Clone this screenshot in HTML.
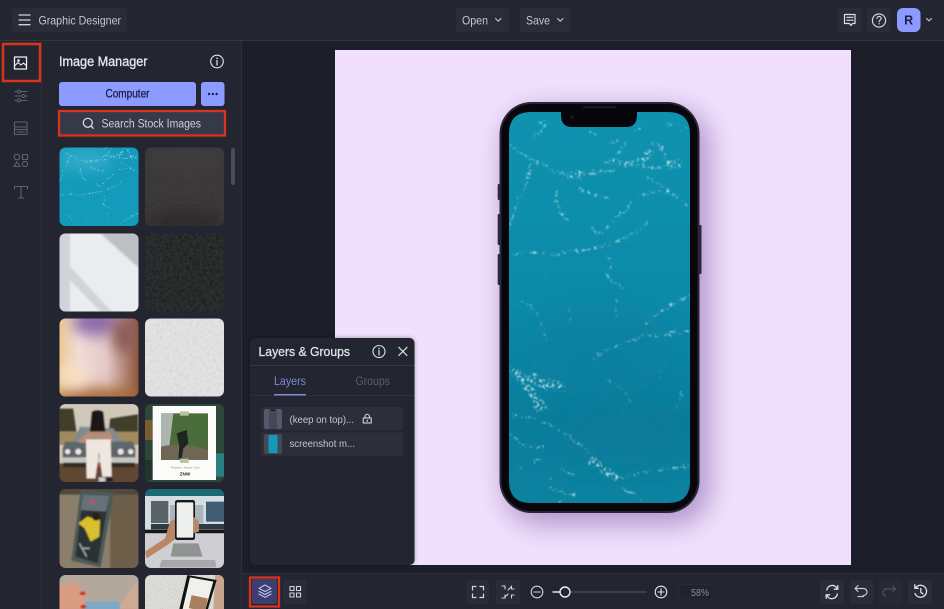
<!DOCTYPE html>
<html lang="en"><head><meta charset="utf-8"><title>Graphic Designer</title>
<style>
html,body{margin:0;padding:0;width:944px;height:609px;overflow:hidden;background:#1c1e29}
svg{display:block;position:absolute;left:0;top:0;filter:blur(.3px)}
text{font-family:"Liberation Sans",sans-serif}
.i{fill:none;stroke-linecap:round;stroke-linejoin:round}
</style></head><body>
<svg width="944" height="609" viewBox="0 0 944 609" xmlns="http://www.w3.org/2000/svg">
<defs>
<linearGradient id="wg" x1="0" y1="0" x2="0" y2="1"><stop offset="0" stop-color="#0e92af"/><stop offset=".5" stop-color="#0c8aa8"/><stop offset=".8" stop-color="#0a7d9c"/><stop offset="1" stop-color="#0c83a1"/></linearGradient>
<linearGradient id="shot" x1="0" y1="0" x2="1" y2="0"><stop offset="0" stop-color="#ecc88f"/><stop offset=".25" stop-color="#f0dcd8"/><stop offset=".6" stop-color="#e3c8c6"/><stop offset="1" stop-color="#8b5238"/></linearGradient>
<filter id="b05"><feGaussianBlur stdDeviation=".5"/></filter>
<filter id="b1"><feGaussianBlur stdDeviation="1"/></filter>
<filter id="b2" x="-30%" y="-30%" width="160%" height="160%"><feGaussianBlur stdDeviation="2"/></filter>
<filter id="b8" x="-150%" y="-150%" width="400%" height="400%"><feGaussianBlur stdDeviation="7"/></filter>
<filter id="b16" x="-40%" y="-30%" width="180%" height="160%"><feGaussianBlur stdDeviation="14"/></filter>
<filter id="spark" x="-5%" y="-5%" width="110%" height="110%">
<feTurbulence type="fractalNoise" baseFrequency=".07" numOctaves="2" seed="4" result="n1"/>
<feDisplacementMap in="SourceGraphic" in2="n1" scale="20" xChannelSelector="R" yChannelSelector="G" result="d"/>
<feGaussianBlur in="d" stdDeviation="2" result="soft"/>
<feTurbulence type="fractalNoise" baseFrequency=".11" numOctaves="2" seed="7" result="n2"/>
<feColorMatrix in="n2" values="0 0 0 0 .86 0 0 0 0 .96 0 0 0 0 .97 6 0 0 0 -2.9" result="sp"/>
<feComposite in="sp" in2="soft" operator="in" result="o"/>
<feGaussianBlur in="o" stdDeviation="1.600"/>
</filter>
<filter id="nw"><feTurbulence type="fractalNoise" baseFrequency=".45" numOctaves="3" seed="3"/><feColorMatrix values="0 0 0 0 1 0 0 0 0 1 0 0 0 0 1 1.7 0 0 0 -.8"/></filter>
<filter id="nd"><feTurbulence type="fractalNoise" baseFrequency=".3" numOctaves="3" seed="8"/><feColorMatrix values="0 0 0 0 0 0 0 0 0 0 0 0 0 0 0 2 0 0 0 -.8"/></filter>
<filter id="speck"><feTurbulence type="fractalNoise" baseFrequency=".7" numOctaves="2" seed="11"/><feColorMatrix values="0 0 0 0 .25 0 0 0 0 .25 0 0 0 0 .25 5 0 0 0 -3.1"/></filter>
<clipPath id="scr"><path d="M531 112H561V115Q561 127 572 127H626Q637 127 637 115V112H668Q690 112 690 134V481Q690 503 668 503H531Q509 503 509 481V134Q509 112 531 112Z"/></clipPath>
<clipPath id="c1"><rect x="59.500" y="147.500" width="79" height="78.500" rx="6"/></clipPath>
<clipPath id="c2"><rect x="145" y="147.500" width="79" height="78.500" rx="6"/></clipPath>
<clipPath id="c3"><rect x="59.500" y="233.500" width="79" height="78" rx="6"/></clipPath>
<clipPath id="c4"><rect x="145" y="233.500" width="79" height="78" rx="6"/></clipPath>
<clipPath id="c5"><rect x="59.500" y="318.500" width="79" height="78" rx="6"/></clipPath>
<clipPath id="c6"><rect x="145" y="318.500" width="79" height="78" rx="6"/></clipPath>
<clipPath id="c7"><rect x="59.500" y="404" width="79" height="78" rx="6"/></clipPath>
<clipPath id="c8"><rect x="145" y="404" width="79" height="78" rx="6"/></clipPath>
<clipPath id="c9"><rect x="59.500" y="489" width="79" height="79" rx="6"/></clipPath>
<clipPath id="c10"><rect x="145" y="489" width="79" height="79" rx="6"/></clipPath>
<clipPath id="c11"><rect x="59.500" y="575" width="79" height="50" rx="6"/></clipPath>
<clipPath id="c12"><rect x="145" y="575" width="79" height="50" rx="6"/></clipPath>
<g id="sparks" fill="none" stroke="#fff" stroke-linecap="round" filter="url(#spark)" opacity=".68">
<g stroke-width="6">
<path d="M30 135C60 160 95 180 130 195C160 215 195 225 235 225C270 215 320 215 350 210"/>
<path d="M95 180C90 220 80 260 55 300C45 330 35 360 30 385"/>
<path d="M225 255C245 275 280 290 325 293"/>
<path d="M170 270C165 300 170 330 200 355"/>
<path d="M395 310C370 340 335 355 320 385C300 410 285 400 280 385"/>
<path d="M30 465C80 450 120 460 170 465C210 450 250 455 265 450C300 440 320 430 350 425C385 410 420 395 440 370"/>
<path d="M320 470C335 490 345 510 320 520C330 545 350 555 370 560"/>
<path d="M285 775C320 745 370 730 420 712C470 700 530 705 570 690"/>
<path d="M440 670C470 640 520 610 570 585"/>
<path d="M350 165L375 130M330 180C370 190 420 195 440 150M450 130C480 125 495 150 495 180"/>
<path d="M315 185C400 195 470 210 540 200M440 230C490 260 530 290 570 325M420 285C450 275 480 270 510 280"/>
<path d="M120 60C150 80 130 100 90 115M270 95l20 8M330 125h20M410 90h10M505 75h25M550 85h12"/>
<path d="M30 945C120 950 190 990 260 1050C290 1080 310 1110 370 1135C430 1110 500 1110 570 1095"/>
<path d="M30 1000C60 1030 90 1050 130 1040M60 1100h2M100 1085l25-5M145 1135h15M180 1110C200 1110 215 1120 220 1130M150 1165C180 1170 200 1180 225 1185M190 1200L175 1215M370 1165C390 1180 410 1190 430 1200"/>
</g>
<g stroke-width="22">
<path d="M30 810C70 830 100 870 115 925"/><path d="M50 815C90 860 140 840 185 865"/><path d="M75 850C90 880 110 890 130 920"/><path d="M100 830C120 850 150 870 170 850"/>
<path d="M275 1082C285 1090 300 1110 345 1130"/><path d="M215 225h30"/><path d="M430 180l20-25"/><path d="M510 190h25"/>
</g>
<g stroke-width="5" opacity=".45">
<path d="M40 620C90 580 130 660 140 720M210 620v50M350 600v50M320 840C370 860 420 900 360 940M480 800v40M530 930l20-70M150 720h2M135 530h8"/>
</g>
</g>
</defs>

<!-- canvas -->
<rect width="944" height="609" fill="#1c1e29"/>
<rect x="335" y="50" width="516" height="515" fill="#f1e0fd"/>
<!-- phone -->
<rect x="505" y="110" width="204" height="414" rx="34" fill="#7f5fa5" opacity=".6" filter="url(#b16)"/>
<g fill="#2c283b"><rect x="497.700" y="184" width="2.500" height="16" rx="1"/><rect x="497.700" y="214" width="2.500" height="31" rx="1"/><rect x="497.700" y="254" width="2.500" height="31" rx="1"/><rect x="699" y="225" width="2.500" height="49" rx="1"/></g>
<rect x="499.500" y="102" width="200" height="411" rx="32" fill="#2a2537"/>
<rect x="501.500" y="104" width="196" height="407" rx="30" fill="#07060b"/>
<g clip-path="url(#scr)">
<rect x="509" y="112" width="181" height="391" fill="url(#wg)"/>
<ellipse cx="600" cy="350" rx="70" ry="50" fill="#0a7f9f" opacity=".5" filter="url(#b16)"/>
<ellipse cx="620" cy="430" rx="60" ry="35" fill="#077a99" opacity=".55" filter="url(#b16)"/>
<use href="#sparks" transform="translate(500 100) scale(.3333)"/>
</g>
<rect x="583" y="106.500" width="33" height="1.400" rx=".7" fill="#25222d"/>
<circle cx="572" cy="117" r="2" fill="#141622"/>

<!-- top bar -->
<rect width="944" height="40" fill="#232531"/>
<rect y="40" width="944" height="1" fill="#33353f"/>
<rect x="12" y="8" width="115" height="24" rx="3" fill="#2a2c39"/>
<path d="M19 15H30M19 20H30M19 24.700H30" stroke="#d2d3d9" stroke-width="1.300" class="i"/>
<text x="38.500" y="24.300" font-size="12" fill="#c6c7cf" textLength="82.500" lengthAdjust="spacingAndGlyphs">Graphic Designer</text>
<rect x="456" y="8" width="53" height="24" rx="3" fill="#2a2c39"/>
<text x="462" y="24.300" font-size="12" fill="#c6c7cf" textLength="26" lengthAdjust="spacingAndGlyphs">Open</text>
<path d="M495.500 18.500L498.300 21.200L501 18.500" stroke="#c6c7cf" stroke-width="1.100" class="i"/>
<rect x="520" y="8" width="50" height="24" rx="3" fill="#2a2c39"/>
<text x="526" y="24.300" font-size="12" fill="#c6c7cf" textLength="24" lengthAdjust="spacingAndGlyphs">Save</text>
<path d="M557.500 18.500L560.300 21.200L563 18.500" stroke="#c6c7cf" stroke-width="1.100" class="i"/>
<rect x="838" y="8" width="24" height="24" rx="3" fill="#2a2c39"/>
<path d="M844.500 14.500H855V23.500H852.500L851 25.500L849.500 23.500H844.500ZM846.800 17.300H853M846.800 20.200H853" stroke="#e0e1e6" stroke-width="1.200" class="i"/>
<rect x="867" y="8" width="24" height="24" rx="3" fill="#2a2c39"/>
<circle cx="879" cy="20.500" r="6.600" stroke="#e0e1e6" stroke-width="1.100" class="i"/>
<path d="M877 18.500C877 15.800 881.200 15.800 881.200 18.500C881.200 20 879.100 20 879.100 21.800" stroke="#e0e1e6" stroke-width="1.100" class="i"/><circle cx="879.100" cy="23.800" r=".7" fill="#e0e1e6"/>
<rect x="897" y="8" width="23.500" height="24" rx="6" fill="#8c9bff"/>
<text x="908.700" y="24.500" font-size="12.500" font-weight="700" fill="#1b1d42" text-anchor="middle">R</text>
<path d="M926.500 18.500L929 20.800L931.500 18.500" stroke="#c6c7cf" stroke-width="1.100" class="i"/>

<!-- left rail + panel -->
<rect x="0" y="41" width="241" height="568" fill="#232531"/>
<rect x="41" y="41" width="1" height="568" fill="#2e303c"/>
<rect x="241" y="41" width="1" height="568" fill="#2e303c"/>
<g class="i" stroke-width="1.100">
<rect x="14.500" y="57" width="12" height="12" stroke="#f0f0f3" stroke-width="1.300"/>
<path d="M14.500 66L18 62.500L21 65L23.500 63L26.500 66" stroke="#f0f0f3"/><circle cx="18.500" cy="60.500" r="1.300" fill="#f0f0f3" stroke="none"/>
<g stroke="#5f6275">
<path d="M15 91.500H27M15 96H27M15 100.500H27"/><circle cx="19" cy="91.500" r="1.600" fill="#232531"/><circle cx="23.500" cy="96" r="1.600" fill="#232531"/><circle cx="19" cy="100.500" r="1.600" fill="#232531"/>
<rect x="14.500" y="122" width="12.500" height="12.500" rx=".5"/><path d="M14.500 127H27M14.500 129.500H27M17 132H24.500"/>
<circle cx="17" cy="157" r="2.800"/><rect x="22.500" y="154.500" width="5" height="5"/><path d="M17 161.800L20 166.500H14Z"/><circle cx="25" cy="164" r="2.600"/>
<path d="M14.500 189V186.500H27.500V189M21 186.500V198M18.500 198H23.500"/>
</g></g>
<rect x="3" y="44" width="37" height="37" fill="none" stroke="#d8331b" stroke-width="2.500"/>

<text x="59" y="66" font-size="13.500" fill="#e6e6ea" stroke="#e6e6ea" stroke-width=".35" textLength="88.500" lengthAdjust="spacingAndGlyphs">Image Manager</text>
<circle cx="217" cy="61.500" r="6.300" stroke="#e6e6ea" stroke-width="1.100" class="i"/>
<path d="M217 60.500V65" stroke="#e6e6ea" stroke-width="1.200" class="i"/><circle cx="217" cy="58.300" r=".8" fill="#e6e6ea"/>
<rect x="59" y="82" width="137" height="24" rx="3" fill="#8c9bff"/>
<text x="127.500" y="97.500" font-size="11.500" fill="#1b1e4b" stroke="#1b1e4b" stroke-width=".3" text-anchor="middle" textLength="44" lengthAdjust="spacingAndGlyphs">Computer</text>
<rect x="201" y="82" width="23.500" height="24" rx="3" fill="#8c9bff"/>
<g fill="#1b1e4b"><circle cx="209" cy="94" r="1.200"/><circle cx="212.800" cy="94" r="1.200"/><circle cx="216.600" cy="94" r="1.200"/></g>
<rect x="59" y="111" width="165" height="24" rx="2" fill="#363949"/>
<circle cx="87.800" cy="122.800" r="4.500" stroke="#e8e8ec" stroke-width="1.200" class="i"/><path d="M91.200 126.200L93.300 128.300" stroke="#e8e8ec" stroke-width="1.200" class="i"/>
<text x="101.500" y="127.700" font-size="11.500" fill="#cfd0d7" textLength="99.500" lengthAdjust="spacingAndGlyphs">Search Stock Images</text>
<rect x="59" y="111" width="166" height="24.500" fill="none" stroke="#d8331b" stroke-width="2.300"/>
<rect x="231" y="148" width="4" height="37" rx="2" fill="#484b5c"/>

<!-- thumbs -->
<g clip-path="url(#c1)"><rect x="59" y="147" width="80" height="80" fill="#149abb"/><ellipse cx="85" cy="160" rx="30" ry="12" fill="#3fb6d0" opacity=".6" filter="url(#b8)"/><use href="#sparks" transform="translate(55 130) scale(.15 .14)"/></g>
<g clip-path="url(#c2)"><rect x="145" y="147" width="80" height="80" fill="#3b3839"/><rect x="145" y="147" width="80" height="80" filter="url(#nw)" opacity=".06"/><ellipse cx="185" cy="222" rx="40" ry="12" fill="#2a2728" opacity=".7" filter="url(#b8)"/><ellipse cx="185" cy="160" rx="36" ry="12" fill="#454244" opacity=".5" filter="url(#b8)"/></g>
<g clip-path="url(#c3)"><rect x="59" y="233" width="80" height="80" fill="#eaedf0"/>
<path d="M70 233V312H59V233ZM66 262L112 312H101L66 276Z" fill="#d0d4d8" filter="url(#b1)"/><path d="M100 233H139V268Z" fill="#bcc0c3" filter="url(#b1)"/></g>
<g clip-path="url(#c4)"><rect x="145" y="233" width="80" height="80" fill="#2a2c2d"/><rect x="145" y="233" width="80" height="80" filter="url(#nw)" opacity=".09"/><rect x="145" y="233" width="80" height="80" filter="url(#nd)" opacity=".35"/></g>
<g clip-path="url(#c5)"><rect x="59" y="318" width="80" height="80" fill="url(#shot)"/>
<ellipse cx="96" cy="322" rx="24" ry="14" fill="#8d6aa8" filter="url(#b8)"/><ellipse cx="125" cy="335" rx="12" ry="18" fill="#8a5a58" filter="url(#b8)"/><ellipse cx="100" cy="398" rx="48" ry="10" fill="#a5662f" filter="url(#b8)"/><ellipse cx="72" cy="375" rx="14" ry="12" fill="#f8dfc0" filter="url(#b8)"/></g>
<g clip-path="url(#c6)"><rect x="145" y="318" width="80" height="80" fill="#e2e2e2"/><rect x="145" y="318" width="80" height="80" filter="url(#nd)" opacity=".05"/><rect x="145" y="318" width="80" height="80" filter="url(#nw)" opacity=".12"/></g>
<g clip-path="url(#c7)"><g transform="translate(50 400) scale(.33333)" filter="url(#b2)">
<rect x="25" y="10" width="245" height="240" fill="#d0c8b8"/><path d="M25 25H70L80 95H25ZM180 55L265 42V105H175Z" fill="#3f4029"/><rect x="25" y="95" width="245" height="40" fill="#a08a5e"/><rect x="25" y="190" width="245" height="60" fill="#5f4630"/>
<path d="M90 80L190 85L215 125H70Z" fill="#7f8b8e"/><path d="M45 125H250L255 145H38Z" fill="#5d676c"/><rect x="38" y="143" width="218" height="30" fill="#5e6365"/><rect x="38" y="172" width="218" height="16" fill="#c6c6c3"/><rect x="40" y="188" width="214" height="14" fill="#352a22"/>
<g fill="#e6e6e6"><circle cx="53" cy="155" r="8"/><circle cx="85" cy="155" r="9"/><circle cx="212" cy="155" r="9"/><circle cx="242" cy="155" r="8"/></g>
<rect x="136" y="188" width="26" height="14" fill="#b5483a"/>
<path d="M125 35Q143 25 160 35L168 110H118Z" fill="#1e1816"/><path d="M80 125L115 95H180L190 125H170L150 115H125L100 130Z" fill="#b58d78"/>
<path d="M108 118H182L185 230H157L147 155L136 235H110Z" fill="#efe7df"/><rect x="146" y="232" width="20" height="13" fill="#c9ccd0"/><rect x="170" y="232" width="18" height="13" fill="#20242a"/></g></g>
<g clip-path="url(#c8)"><g transform="translate(50 400) scale(.33333)" filter="url(#b1)">
<rect x="280" y="8" width="245" height="240" fill="#2f463a"/><rect x="280" y="60" width="28" height="60" fill="#7a5b30"/><rect x="497" y="160" width="30" height="70" fill="#2c7f80"/><rect x="280" y="180" width="28" height="60" fill="#20342c"/>
<rect x="308" y="18" width="190" height="222" fill="#fbfbf9"/><rect x="333" y="40" width="141" height="140" fill="#4c6d3b"/><path d="M333 40H370L358 140H333Z" fill="#adb6ae"/><path d="M333 140Q400 125 474 150V180H333Z" fill="#6f6656"/><path d="M380 100L410 90L415 130L400 145L395 175L385 175L388 140Z" fill="#1f2624"/>
<rect x="390" y="34" width="26" height="13" fill="#b7c49a"/><rect x="390" y="176" width="26" height="13" fill="#b7c49a"/>
<text x="405" y="206" font-size="9" fill="#8a8a84" text-anchor="middle" textLength="88" lengthAdjust="spacingAndGlyphs">Thanks, Hope Sun</text><text x="405" y="226" font-size="14" font-weight="700" fill="#2a2a2a" text-anchor="middle" textLength="32" lengthAdjust="spacingAndGlyphs">ZNW</text></g></g>
<g clip-path="url(#c9)"><g transform="translate(50 400) scale(.33333)" filter="url(#b2)">
<rect x="25" y="262" width="245" height="246" fill="#8b7f6c"/><rect x="180" y="262" width="90" height="246" fill="#6e5e4b"/><rect x="25" y="262" width="245" height="22" fill="#51483b"/>
<path d="M92 270L192 276L152 502L64 482Z" fill="#4b5a55"/><path d="M100 284L178 288L143 490L76 470Z" fill="#2b3134"/><path d="M100 284L178 288L168 335L92 330Z" fill="#66727a"/>
<path d="M85 370L112 350L150 360L148 410L122 425L104 385Z" fill="#d8c02e"/><circle cx="138" cy="350" r="12" fill="#2a1c18"/><rect x="122" y="300" width="12" height="10" fill="#d0407a"/><path d="M88 430L110 470M95 445h24" stroke="#aab0b2" stroke-width="4"/></g></g>
<g clip-path="url(#c10)"><g transform="translate(50 400) scale(.33333)" filter="url(#b1)">
<rect x="280" y="262" width="245" height="246" fill="#d4dde2"/><rect x="280" y="262" width="245" height="26" fill="#1f6b72"/><rect x="303" y="303" width="52" height="66" fill="#5a6367"/><rect x="468" y="305" width="55" height="60" fill="#3f5c72"/><rect x="360" y="315" width="100" height="55" fill="#aab5ba"/><rect x="303" y="372" width="220" height="16" fill="#2e3a44"/><rect x="280" y="389" width="245" height="11" fill="#121416"/><rect x="280" y="400" width="245" height="108" fill="#cfcfd3"/>
<path d="M370 430H445L458 470H362Z" fill="#8f9492"/><path d="M335 480H495L500 502H328Z" fill="#a7a7ac"/>
<path d="M285 455L345 415L360 365L378 355V415L352 435L290 475Z" fill="#b98766"/><rect x="375" y="300" width="60" height="120" rx="7" fill="#15161a"/><rect x="380" y="307" width="50" height="106" rx="3" fill="#eef0ee"/><path d="M430 350L447 365V395L430 400Z" fill="#b98766"/></g></g>
<g clip-path="url(#c11)"><g transform="translate(50 400) scale(.33333)" filter="url(#b2)">
<rect x="25" y="520" width="245" height="110" fill="#b3a89c"/><path d="M25 560L75 545L110 590L100 630H25Z" fill="#d99d83"/><path d="M200 630L262 540L270 630Z" fill="#d0a994"/><rect x="105" y="604" width="105" height="30" rx="6" fill="#7fa8c4"/><ellipse cx="98" cy="580" rx="9" ry="6" fill="#c23a2a"/><ellipse cx="100" cy="620" rx="9" ry="6" fill="#c23a2a"/></g></g>
<g clip-path="url(#c12)"><rect x="145" y="575" width="80" height="40" fill="#dcdbd8"/><rect x="145" y="575" width="80" height="40" filter="url(#speck)" opacity=".4"/><g transform="translate(50 400) scale(.33333)" filter="url(#b1)"><path d="M495 525H525V630H490Z" fill="#c9a48d"/><path d="M412 525L500 540L470 640H385Z" fill="#111214"/><path d="M420 532L490 545L463 640H395Z" fill="#f2f0ec"/><rect x="420" y="590" width="50" height="40" fill="#a9805f" transform="rotate(12 445 610)"/></g></g>

<!-- bottom bar -->
<rect x="242" y="573" width="702" height="36" fill="#232531"/>
<rect x="242" y="573" width="702" height="1" fill="#2e303c"/>
<rect x="252" y="579" width="25" height="25" rx="2" fill="#3d3e70"/>
<g stroke="#c4c6f5" stroke-width="1.100" class="i"><path d="M265 585L271 588.300L265 591.500L259 588.300ZM259 591.300L265 594.500L271 591.300M259 594L265 597.300L271 594"/></g>
<rect x="250" y="577.500" width="29" height="29" fill="none" stroke="#d8331b" stroke-width="2.300"/>
<rect x="283" y="580" width="24" height="24" rx="3" fill="#2a2c39"/>
<g stroke="#d6d7dc" stroke-width="1.100" class="i"><rect x="290" y="586.500" width="4" height="4"/><rect x="296.500" y="586.500" width="4" height="4"/><rect x="290" y="593" width="4" height="4"/><rect x="296.500" y="593" width="4" height="4"/></g>
<rect x="466.500" y="580" width="23" height="24" rx="3" fill="#2a2c39"/>
<path d="M472.500 590V586.500H476M480 586.500H483.500V590M483.500 594V597.500H480M476 597.500H472.500V594" stroke="#d6d7dc" stroke-width="1.200" class="i"/>
<rect x="496" y="580" width="24" height="24" rx="3" fill="#2a2c39"/>
<path d="M502 586H505V589M514 589H511.500V586M514 595H511.500V598M502 598H505V595M508 590L511 587M508 594L505 597" stroke="#d6d7dc" stroke-width="1.100" class="i"/>
<circle cx="537" cy="592" r="5.800" stroke="#d6d7dc" stroke-width="1.100" class="i"/><path d="M533.800 592H540.200" stroke="#d6d7dc" stroke-width="1.100" class="i"/>
<path d="M553 592H560" stroke="#e6e6ea" stroke-width="1.400" class="i"/><path d="M570 592H646" stroke="#565866" stroke-width="1" class="i"/>
<circle cx="565" cy="592" r="5" fill="#232531" stroke="#eeeef2" stroke-width="1.400"/>
<circle cx="661" cy="592" r="5.800" stroke="#e6e6ea" stroke-width="1.100" class="i"/><path d="M657.800 592H664.200M661 588.800V595.200" stroke="#e6e6ea" stroke-width="1.100" class="i"/>
<rect x="679" y="584.500" width="33" height="15.500" rx="2" fill="#20222d" stroke="#2c2e3a" stroke-width=".8"/>
<text x="691" y="596" font-size="10" fill="#8b8d99" textLength="18" lengthAdjust="spacingAndGlyphs">58%</text>
<rect x="820" y="580" width="24" height="24" rx="3" fill="#2a2c39"/>
<path d="M826.800 590A5.500 5.500 0 0 1 836.500 587.500L837.500 589M837.300 594A5.500 5.500 0 0 1 827.500 596.500L826.500 595M837.800 585.700V589.200H834.300M826.200 598.300V594.800H829.700" stroke="#e0e1e6" stroke-width="1.300" class="i"/>
<rect x="850" y="580" width="23.500" height="24" rx="3" fill="#2a2c39"/>
<path d="M858 585.500L855 588.500L858 591.500M855.500 588.500H863.500A3.500 3.500 0 0 1 863.500 595.500V596.500H858" stroke="#c6c7cf" stroke-width="1.200" class="i"/>
<rect x="879" y="580" width="23.500" height="24" rx="3" fill="#272935"/>
<path d="M892.500 586L895.500 589L892.500 592M895 589H888A3.500 3.500 0 0 0 885.500 596" stroke="#4e505e" stroke-width="1.200" class="i"/>
<rect x="908" y="580" width="24" height="24" rx="3" fill="#2a2c39"/>
<path d="M915.500 588A6 6 0 1 1 915 593.500M914.800 584.800V588.300H918.300M920.800 588.500V592.300L923 594" stroke="#e0e1e6" stroke-width="1.300" class="i"/>

<!-- Layers panel -->
<rect x="250" y="338" width="164.500" height="227" rx="5" fill="#000" opacity=".35" filter="url(#b2)"/>
<rect x="250" y="338" width="164.500" height="227" rx="5" fill="#232531"/>
<rect x="250" y="365" width="164.500" height="1" fill="#363845"/>
<rect x="250" y="395" width="164.500" height="1" fill="#2e303c"/>
<text x="258.500" y="356" font-size="13" fill="#e0e1e6" stroke="#e0e1e6" stroke-width=".3" textLength="91.500" lengthAdjust="spacingAndGlyphs">Layers &amp; Groups</text>
<circle cx="379" cy="351.500" r="6" stroke="#e0e1e6" stroke-width="1.100" class="i"/><path d="M379 350.500V355" stroke="#e0e1e6" stroke-width="1.200" class="i"/><circle cx="379" cy="348.400" r=".8" fill="#e0e1e6"/>
<path d="M398.800 347.300L407 355.500M407 347.300L398.800 355.500" stroke="#e0e1e6" stroke-width="1.200" class="i"/>
<text x="274" y="385" font-size="11.500" fill="#7f86dc" textLength="32" lengthAdjust="spacingAndGlyphs">Layers</text>
<rect x="274" y="394" width="32" height="1.500" fill="#7f86dc"/>
<text x="355.500" y="385" font-size="11.500" fill="#5b5e6e" textLength="34.500" lengthAdjust="spacingAndGlyphs">Groups</text>
<rect x="261" y="407" width="142" height="23.500" rx="2" fill="#2c2e3c"/>
<rect x="261" y="432.500" width="142" height="23.500" rx="2" fill="#2c2e3c"/>
<rect x="264" y="409" width="18" height="20" rx="2" fill="#555866"/><rect x="269" y="409" width="8" height="20" fill="#44475a"/><rect x="271" y="409.500" width="4" height="1.500" fill="#15161d"/>
<rect x="264" y="434" width="18" height="20" rx="2" fill="#454858"/><rect x="268.500" y="435" width="9" height="18" rx="1" fill="#129ab8"/>
<text x="289.500" y="423" font-size="10.500" fill="#c6c7cf" textLength="64.500" lengthAdjust="spacingAndGlyphs">(keep on top)...</text>
<path d="M363.200 418H371.200V423H363.200ZM365 418V416.500A2.200 2.200 0 0 1 369.400 416.500V418M367.200 420V421.500" stroke="#e0e1e6" stroke-width="1" class="i"/>
<text x="289.500" y="447" font-size="10.500" fill="#c6c7cf" textLength="65.500" lengthAdjust="spacingAndGlyphs">screenshot m...</text>
</svg>
</body></html>
